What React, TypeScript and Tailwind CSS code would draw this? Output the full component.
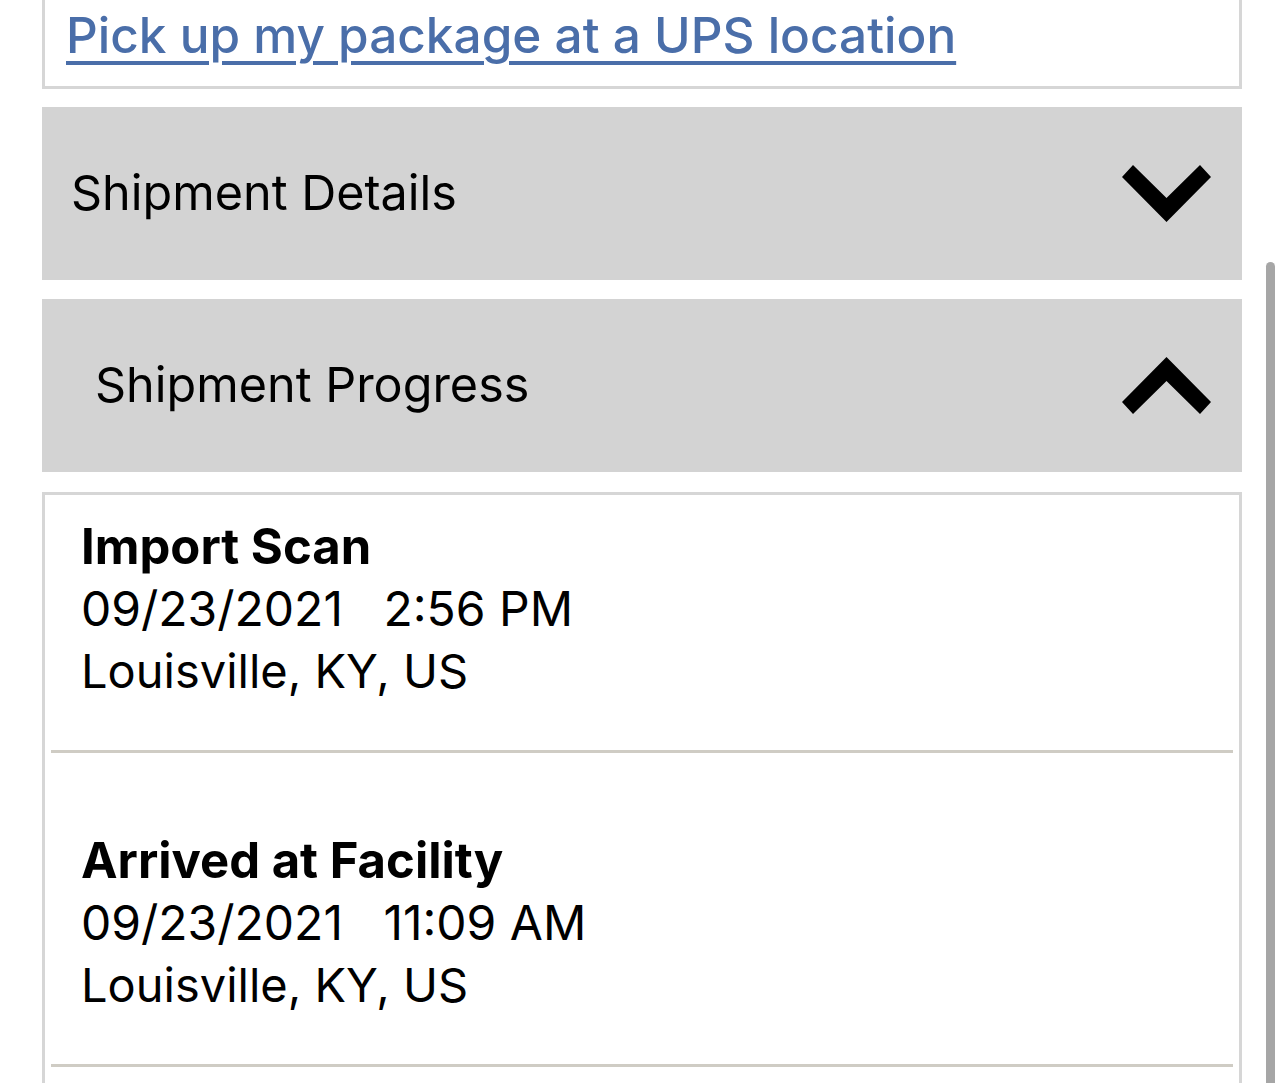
import React from 'react';

const ChevronDown = () => (
  <svg width="89" height="57" viewBox="0 0 89 57" className="shrink-0">
    <polygon points="0,12 11,0 44.5,33 78,0 89,12 44.5,57" fill="#000" />
  </svg>
);

const ChevronUp = () => (
  <svg width="89" height="57" viewBox="0 0 89 57" className="shrink-0">
    <polygon points="0,45 44.5,0 89,45 78,57 44.5,24 11,57" fill="#000" />
  </svg>
);

interface ScanProps {
  title: string;
  date: string;
  time: string;
  place: string;
  first?: boolean;
}

const ScanRow: React.FC<ScanProps> = ({ title, date, time, place, first }) => (
  <div className={`mx-[6px] border-b-[3px] border-[#cfccc4] pb-[48px] ${first ? 'pt-[21px]' : 'pt-[77px]'}`}>
    <div className="pl-[30px] text-[48px] leading-[62px] text-black">
      <div className="text-[49px] font-bold">{title}</div>
      <div className="whitespace-pre">{date}   {time}</div>
      <div className="text-[47px]">{place}</div>
    </div>
  </div>
);

const App: React.FC = () => {
  return (
    <div className="relative h-[1083px] overflow-hidden bg-white" style={{ fontFamily: 'Inter, "Noto Sans", sans-serif' }}>
      <div className="px-[42px]">
        {/* pickup link box, top cut off */}
        <div className="h-[89px] border-x-[3px] border-b-[3px] border-[#d6d6d6] pl-[21px] pt-[4px]">
          <a href="#" className="text-[49.5px] font-medium leading-[62px] text-[#4a6ea9] underline decoration-[4px] underline-offset-[8px]">
            Pick up my package at a UPS location
          </a>
        </div>

        <div className="mt-[18px] flex h-[173px] items-center justify-between bg-[#d3d3d3] pl-[29px] pr-[31px]">
          <span className="text-[48.5px] text-black">Shipment Details</span>
          <ChevronDown />
        </div>

        <div className="mt-[19px] flex h-[173px] items-center justify-between bg-[#d3d3d3] pl-[53px] pr-[31px]">
          <span className="text-[48.5px] text-black">Shipment Progress</span>
          <ChevronUp />
        </div>

        <div className="mt-[20px] h-[700px] border-[3px] border-[#d6d6d6]">
          <ScanRow first title="Import Scan" date="09/23/2021" time="2:56 PM" place="Louisville, KY, US" />
          <ScanRow title="Arrived at Facility" date="09/23/2021" time="11:09 AM" place="Louisville, KY, US" />
        </div>
      </div>

      <div className="absolute left-[1266px] top-[262px] h-[900px] w-[9px] rounded-full bg-[#a6a6a6]" />
    </div>
  );
};

export default App;
